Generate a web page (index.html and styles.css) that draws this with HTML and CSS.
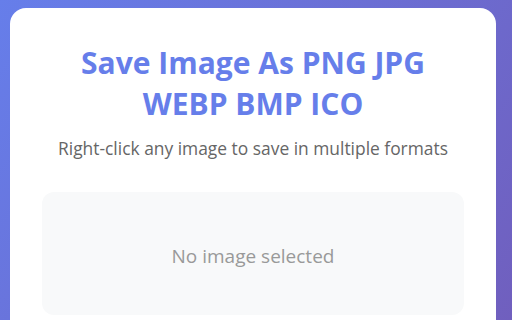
FILE: index.html
```html
<!DOCTYPE html>
<html lang="en">

<head>
    <meta charset="UTF-8">
    <meta name="viewport" content="width=device-width, initial-scale=1.0">
    <title>Save Image As</title>
    <link rel="stylesheet" href="styles.css">
</head>

<body>
    <div class="popup">
        <h1 class="popup-title">Save Image As PNG JPG WEBP BMP ICO</h1>
        <p class="popup-subtitle">Right-click any image to save in multiple formats</p>
        <div class="preview">
            <p class="preview-empty">No image selected</p>
        </div>
    </div>
</body>

</html>
```

FILE: styles.css
```css
*,
*::before,
*::after {
    box-sizing: border-box;
}

body {
    margin: 0;
    padding: 8px 16px 20px 10px;
    font-family: 'Open Sans', 'Noto Sans', sans-serif;
    background: linear-gradient(126deg, #667eea 0%, #705fbe 100%) fixed;
}

p {
    margin: 0;
}

.popup {
    width: 486px;
    min-height: 560px;
    padding: 32px;
    background-color: #fff;
    border-radius: 16px;
}

.popup-title {
    margin: 2px 10px 0;
    color: #667eea;
    font-size: 30px;
    font-weight: 700;
    line-height: 41px;
    text-align: center;
}

.popup-subtitle {
    margin-top: 12px;
    color: #666;
    font-size: 17.4px;
    line-height: 24px;
    text-align: center;
}

.preview {
    margin-top: 32px;
    padding: 53px 20px 47px;
    background-color: #f8f9fa;
    border-radius: 12px;
}

.preview-empty {
    color: #999;
    font-size: 19px;
    line-height: 23px;
    text-align: center;
}
```
